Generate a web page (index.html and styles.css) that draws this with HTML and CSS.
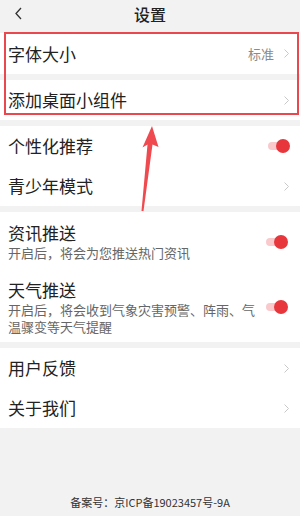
FILE: index.html
```html
<!DOCTYPE html>
<html lang="zh">
<head>
<meta charset="utf-8">
<title>设置</title>
<link rel="stylesheet" href="styles.css">
</head>
<body>
<div class="page">
  <header class="topbar">
    <svg class="back" width="9" height="13" viewBox="0 0 9 13"><polyline points="7,1 2,6.5 7,12" fill="none" stroke="#333" stroke-width="1.3"/></svg>
    <h1 class="title">设置</h1>
  </header>

  <section class="group first">
    <div class="row tall">
      <span class="label">字体大小</span>
      <span class="value">标准</span>
      <svg class="chev" width="5" height="9" viewBox="0 0 5 9"><polyline points="0.5,0.5 4.5,4.5 0.5,8.5" fill="none" stroke="#c8c8c8" stroke-width="1"/></svg>
    </div>
  </section>
  <section class="group">
    <div class="row">
      <span class="label">添加桌面小组件</span>
      <svg class="chev" width="5" height="9" viewBox="0 0 5 9"><polyline points="0.5,0.5 4.5,4.5 0.5,8.5" fill="none" stroke="#c8c8c8" stroke-width="1"/></svg>
    </div>
  </section>

  <section class="group">
    <div class="row">
      <span class="label">个性化推荐</span>
      <span class="toggle"><span class="thumb"></span></span>
    </div>
    <div class="row">
      <span class="label">青少年模式</span>
      <svg class="chev" width="5" height="9" viewBox="0 0 5 9"><polyline points="0.5,0.5 4.5,4.5 0.5,8.5" fill="none" stroke="#c8c8c8" stroke-width="1"/></svg>
    </div>
  </section>

  <section class="group">
    <div class="row multi one">
      <div class="texts">
        <div class="label">资讯推送</div>
        <div class="sub">开启后，将会为您推送热门资讯</div>
      </div>
      <span class="toggle"><span class="thumb"></span></span>
    </div>
    <div class="row multi two">
      <div class="texts">
        <div class="label">天气推送</div>
        <div class="sub">开启后，将会收到气象灾害预警、阵雨、气温骤变等天气提醒</div>
      </div>
      <span class="toggle"><span class="thumb"></span></span>
    </div>
  </section>

  <section class="group last">
    <div class="row">
      <span class="label">用户反馈</span>
      <svg class="chev" width="5" height="9" viewBox="0 0 5 9"><polyline points="0.5,0.5 4.5,4.5 0.5,8.5" fill="none" stroke="#c8c8c8" stroke-width="1"/></svg>
    </div>
    <div class="row">
      <span class="label">关于我们</span>
      <svg class="chev" width="5" height="9" viewBox="0 0 5 9"><polyline points="0.5,0.5 4.5,4.5 0.5,8.5" fill="none" stroke="#c8c8c8" stroke-width="1"/></svg>
    </div>
  </section>

  <footer class="footer">备案号：京ICP备19023457号-9A</footer>

  <div class="highlight"></div>
  <svg class="arrow" width="300" height="516" viewBox="0 0 300 516"><polygon points="152,126 158.5,147 152.5,144.5 143.5,211 141.5,211 147.5,144.5 142.5,147.5" fill="#ee4a50"/></svg>
</div>
</body>
</html>
```

FILE: styles.css
```css
* { box-sizing: border-box; }
html, body { margin: 0; padding: 0; }
body {
  background: #f2f2f2;
  font-family: "Noto Sans CJK SC", "Noto Sans", sans-serif;
  color: #222;
}
.page {
  position: relative;
  width: 300px;
  min-height: 516px;
  display: flex;
  flex-direction: column;
}
.topbar {
  height: 30px;
  display: flex;
  align-items: flex-start;
  justify-content: center;
  padding-top: 3px;
  position: relative;
}
.back {
  position: absolute;
  left: 14px;
  top: 7px;
}
.title {
  margin: 0;
  font-size: 16px;
  font-weight: 500;
  line-height: 22px;
  color: #222;
}
.group {
  background: #fff;
  margin-top: 6px;
}
.group.first { margin-top: 3px; }
.row {
  height: 40px;
  display: flex;
  align-items: center;
  padding: 0 11px 0 8px;
}
.row.tall { height: 41px; }
.label {
  font-size: 17px;
  line-height: 22px;
  color: #222;
  flex: 1;
}
.value {
  font-size: 13px;
  color: #8a8a8a;
  margin-right: 10px;
}
.chev { display: block; }
.toggle {
  position: relative;
  width: 22px;
  height: 14px;
  margin-right: -1px;
  display: flex;
  justify-content: flex-end;
  align-items: center;
}
.toggle::before {
  content: "";
  position: absolute;
  left: 0;
  top: 3px;
  width: 14px;
  height: 8px;
  border-radius: 4px;
  background: #f9c9cc;
}
.thumb {
  position: relative;
  width: 14px;
  height: 14px;
  border-radius: 50%;
  background: #e8363d;
}
.row.multi {
  height: auto;
  align-items: center;
}
.row.multi.one { padding-top: 10px; padding-bottom: 8px; }
.row.multi.two { padding-top: 10px; padding-bottom: 7px; }
.texts { flex: 1; max-width: 258px; }
.texts .label { display: block; }
.sub {
  font-size: 13px;
  line-height: 17px;
  color: #666;
}
.footer {
  margin-top: auto;
  text-align: center;
  font-size: 11px;
  line-height: 16px;
  color: #333;
  padding-bottom: 6px;
}
.highlight {
  position: absolute;
  left: 4px;
  top: 32px;
  width: 295px;
  height: 83px;
  border: 2px solid #e8484e;
  pointer-events: none;
}
.arrow {
  position: absolute;
  left: 0;
  top: 0;
  pointer-events: none;
}
```
